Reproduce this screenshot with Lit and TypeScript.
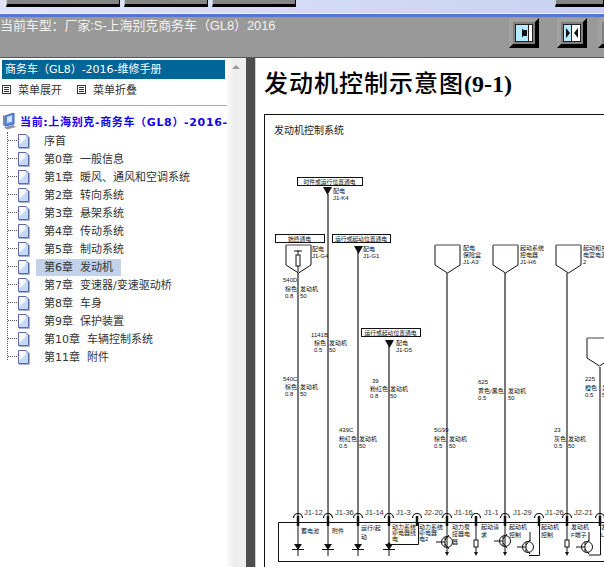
import { LitElement, html, css, svg } from "lit";
import { customElement } from "lit/decorators.js";

type T = [number, number, string];
const labels: T[] = [
  [333, 191, "配电"], [333, 198, "J1-K4"],
  [312, 249, "配电"], [312, 256, "J1-G4"],
  [363, 249, "配电"], [363, 256, "J1-G1"],
  [396, 343, "配电"], [396, 350, "J1-D5"],
  [463, 248, "配电"], [463, 255, "保险盒"], [463, 262, "J1-A3"],
  [520, 248, "起动系统"], [520, 255, "控电器"], [520, 262, "J1-H6"],
  [583, 248, "起动和充"], [583, 255, "电室电源"], [583, 262, "2"],
  [283, 280, "540D"], [285, 289, "棕色"], [300, 289, "发动机"], [285, 296, "0.8"], [300, 296, "50"],
  [311, 335, "1141B"], [314, 343, "棕色"], [329, 343, "发动机"], [314, 350, "0.5"], [329, 350, "50"],
  [283, 379, "540C"], [285, 387, "棕色"], [300, 387, "发动机"], [285, 394, "0.8"], [300, 394, "50"],
  [372, 381, "39"], [370, 389, "粉红色"], [390, 389, "发动机"], [370, 396, "0.8"], [390, 396, "50"],
  [339, 430, "439C"], [339, 439, "粉红色"], [359, 439, "发动机"], [339, 446, "0.5"], [359, 446, "50"],
  [434, 430, "5G99"], [434, 439, "棕色"], [449, 439, "发动机"], [434, 446, "0.5"], [449, 446, "50"],
  [478, 382, "625"], [478, 391, "黄色/黑色"], [508, 391, "发动机"], [478, 398, "0.5"], [508, 398, "50"],
  [585, 379, "225"], [585, 388, "橙色"], [602, 388, "发"], [585, 395, "0.5"], [602, 395, "5"],
  [554, 430, "23"], [554, 439, "灰色"], [568, 439, "发动机"], [554, 446, "0.5"], [568, 446, "50"],
  [301, 532, "蓄电池"], [332, 532, "附件"],
  [361, 529, "运行/起"], [361, 538, "动"],
  [392, 528, "动力系统"], [392, 534, "牵电器线"], [392, 540, "电"],
  [419, 528, "动力系统"], [419, 534, "牵电器"], [419, 540, "电2"],
  [452, 528, "动力泵"], [452, 535, "接器电"], [452, 543, "器"],
  [481, 528, "起动请"], [481, 536, "求"],
  [509, 528, "起动机"], [509, 536, "控制"],
  [541, 528, "起动机"], [541, 536, "控制"],
  [571, 528, "发动机"], [571, 536, "F端子"],
  [601, 528, "发"], [601, 536, "L"],
];
const pins: [number, string, number][] = [
  [298, "J1-12", 304], [328, "J1-36", 335], [358, "J1-14", 365], [389, "J1-3", 396],
  [417, "J2-20", 424], [447, "J1-16", 454], [476, "J1-1", 484], [505, "J1-29", 513],
  [539, "J1-26", 545], [567, "J2-21", 574], [600, "", 0],
];
const boxes: [number, number, number, string][] = [
  [297, 177, 65, "时件或运行位置通电"],
  [275, 234, 49, "始终通电"],
  [332, 234, 58, "运行或起动位置通电"],
  [361, 328, 59, "运行或起动位置通电"],
];
const wires: [number, number, number, boolean][] = [
  [298, 273, 520, false], [328, 194, 520, true], [358, 252, 520, true], [389, 346, 520, true],
  [447, 273, 520, false], [505, 273, 520, true], [567, 273, 520, false], [600, 367, 520, false],
];
const pentagons: [number, number, number][] = [
  [286, 245, 25], [435, 245, 25], [493, 245, 25], [556, 245, 25], [587, 338, 25],
];

const diagram = () => svg`
  <path class="ln" d="M264.5 114V567M264 114.5H604"/>
  <text class="title" x="274" y="134">发动机控制系统</text>
  ${wires.map(([x, a, b, g]) => svg`<path class=${g ? "wg" : "wd"} d="M${x} ${a}V${b}"/>`)}
  ${pentagons.map(([x, y, w]) => svg`
    <path class="ln" d="M${x} ${y}V${y + 20}L${x + w / 2} ${y + 28}L${x + w} ${y + 20}V${y}"/>
    <path class="ptop" d="M${x} ${y}H${x + w}"/>`)}
  <path class="ln" d="M298 250V272M294 251H302"/><rect class="wh" x="296" y="255" width="4" height="11"/>
  ${boxes.map(([x, y, w, t]) => svg`
    <rect class="box" x=${x + 0.5} y=${y + 0.5} width=${w} height="8"/>
    <text class="tiny" x=${x + w / 2} y=${y + 7} text-anchor="middle">${t}</text>`)}
  <path class="fill" d="M323 187H332L327.500 195Z"/>
  <path class="fill" d="M354 246H363L358.500 254Z"/>
  <path class="fill" d="M385 340H394L389.500 348Z"/>
  ${labels.map(([x, y, t]) => svg`<text class="small" x=${x} y=${y < 500 ? y + 2 : y + 1}>${t}</text>`)}
  ${pins.map(([x, t, lx]) => svg`
    <path class="arc" d="M${x - 4.5} 518A4.500 4.500 0 0 1 ${x + 4.5} 518"/>
    <path class="stub" d="M${x} 516V526"/>
    ${t ? svg`<text class="pin" x=${lx} y="515">${t}</text>` : null}`)}
  <path class="ln" d="M278.500 562V522.500H604M278 561.500H604"/>
  ${[298, 328, 358, 389].map((x) => svg`
    <path class="ln" d="M${x} 526V556M${x - 6} 549.500H${x + 6}"/>
    <path class="fill" d="M${x - 4} 544H${x + 4}L${x} 550Z"/>`)}
  <circle class="fill" cx="389" cy="544" r="1.500"/>
  <path class="ln" d="M389 544.500H418.500V522M539.500 522V555.500H529"/>
  ${[[447, 542], [505, 541], [528, 547], [587, 547]].map(([x, y]) => svg`
    <circle class="wh" cx=${x} cy=${y} r="5.500"/>
    <path class="ln" d=${`M${x - 11} ${y}H${x - 2}M${x - 2} ${y - 5}V${y + 5}M${x - 2} ${y - 2}L${x + 2} ${y - 7}M${x - 2} ${y + 2}L${x + 2} ${y + 7}`}/>`)}
  <path class="ln" d="M530 541V532M589 541V532M589 555H600.500V522"/>
  ${[447, 476, 505, 567].map((x) => svg`
    <path class="ln" d="M${x} 526V552"/>
    <path class="fill" d="M${x - 2} 552H${x + 2}L${x} 556Z"/>`)}
  <rect class="wh" x="474" y="540" width="4" height="7"/>
  <rect class="wh" x="565" y="540" width="4" height="7"/>
`;

const sections = ["序首", "第0章\u00a0\u00a0一般信息", "第1章\u00a0\u00a0暖风、通风和空调系统", "第2章\u00a0\u00a0转向系统", "第3章\u00a0\u00a0悬架系统", "第4章\u00a0\u00a0传动系统", "第5章\u00a0\u00a0制动系统", "第6章\u00a0\u00a0发动机", "第7章\u00a0\u00a0变速器/变速驱动桥", "第8章\u00a0\u00a0车身", "第9章\u00a0\u00a0保护装置", "第10章\u00a0\u00a0车辆控制系统", "第11章\u00a0\u00a0附件"];

const pageIcon = html`<svg class="page" width="13" height="16" viewBox="0 0 13 16">
  <path d="M1.500 1.500H9L11.500 4V14.500H1.500Z" fill="#c4d8f8" stroke="#5a6aa8"/>
  <path d="M2 2H8.500V6L2 12Z" fill="#f6faff"/>
  <path d="M2 15.500H12.500V4" fill="none" stroke="#aab0c8"/>
</svg>`;
const menuIcon = html`<svg class="page" width="9" height="9" viewBox="0 0 9 9"><rect x=".5" y=".5" width="8" height="8" fill="#fff" stroke="#333"/><path d="M2 2.500H7M2 4.500H7M2 6.500H7" stroke="#333"/></svg>`;
const pcIcon = html`<svg class="page" width="15" height="17" viewBox="0 0 15 17">
  <path d="M3 3L12 0V11L3 13Z" fill="#5f8fe6" stroke="#4060a8"/>
  <path d="M5 4L10 2.500V8.500L5 10Z" fill="#cfe4ff"/>
  <path d="M1 2L3 3V13L1 12Z" fill="#7888a8"/>
  <path d="M2 14L11 12L14 14L5 16.500Z" fill="#8c96b0"/>
</svg>`;
const toolBtn = (inner: unknown) => html`<svg class="tool" width="30" height="30" viewBox="0 0 30 30">
  <path d="M0 0H30V30H0Z" fill="#a0a0a0"/>
  <path d="M30 0V30H0L4 26H26V4Z" fill="#000"/>
  <rect x="4" y="4" width="22" height="22" fill="#808080"/>
  <rect x="6.500" y="6.500" width="17" height="17" fill="#b8eaff" stroke="#222"/>
  ${inner}
</svg>`;
const btnOne = svg`<rect x="20" y="7" width="3" height="16" fill="#fff"/><path d="M19.500 7V23" stroke="#222"/><path d="M13 10.500L15 12.500V17.500L13 19.500ZM15 12H18V18H15Z" fill="#111"/>`;
const btnTwo = svg`<rect x="15" y="7" width="8" height="16" fill="#fff"/><path d="M14.500 7V23" stroke="#222"/><path d="M9 10L13 15L9 20ZM21 10L17 15L21 20Z" fill="#111"/>`;

@customElement("app-root")
export class AppRoot extends LitElement {
  static styles = css`
    :host { display: block; width: 604px; height: 567px; overflow: hidden; background: #fff;
      font-family: "DejaVu Sans", "Noto Sans CJK SC", sans-serif; }
    .top { height: 14px; box-sizing: border-box; display: flex; align-items: flex-start; padding-left: 6px; gap: 4px;
      background: linear-gradient(90deg, #dfe5f6, #c6d2ef); border-bottom: 1px solid #eef1fb; }
    .tb { height: 7px; box-sizing: border-box; background: #858585; border-bottom: 3px solid #000; border-right: 1px solid #000; border-left: 1px solid #ccc; }
    .tb.a { width: 114px; } .tb.b { width: 84px; } .tb.c { width: 84px; }
    .tb.d { width: 49px; margin-left: auto; }
    .rule { height: 3px; background: #5577cc; }
    .bar { height: 41px; box-sizing: border-box; background: #999; border-bottom: 1px solid #555; display: flex; align-items: flex-start; }
    .car { flex: 1; color: #f2f2f2; font: 13px/16px "Liberation Sans", "Noto Sans CJK SC", sans-serif; letter-spacing: -0.1px; padding-top: 1px; white-space: nowrap; }
    .tools { display: flex; gap: 18px; margin-top: 1px; margin-right: -24px; }
    .tool { display: block; flex: none; }
    .tool:last-child { margin-left: -7px; }
    .main { display: flex; height: 509px; }
    .left { width: 227px; flex: none; overflow: hidden; }
    .head { margin: 2px 2px 0 2px; height: 19px; background: #006699; color: #fff; font-size: 11px; line-height: 19px; padding-left: 3px; white-space: nowrap; }
    .menu { display: flex; align-items: center; height: 20px; padding-left: 2px; font-size: 11px; color: #333; margin-bottom: 6px; }
    .menu span { margin: 0 15px 0 7px; }
    .hr { height: 1px; background: #aaa; }
    .cur { display: flex; align-items: center; height: 20px; margin-top: 5px; padding-left: 2px; gap: 3px; color: #1400f0; font-size: 11px; font-weight: bold; letter-spacing: .65px; white-space: nowrap; }
    .tree { position: relative; margin-top: 1px; }
    .tree::before { content: ""; position: absolute; left: 7px; top: 0; height: 228px; border-left: 1px dotted #555; }
    .row { display: flex; align-items: center; height: 18px; font-size: 11px; color: #333; position: relative; padding-left: 17px; white-space: nowrap; }
    .row::before { content: ""; position: absolute; left: 8px; width: 9px; top: 8px; border-top: 1px dotted #555; }
    .page { flex: none; }
    .row b { font-weight: normal; margin-left: 6px; padding: 0 8px; line-height: 17px; }
    .row b.sel { background: #c2d2ea; }
    .scroll { width: 19px; flex: none; background: linear-gradient(90deg, #fafafa, #eeeeee 35%); position: relative; }
    .scroll i { position: absolute; left: 5px; top: 7px; border: 4px solid transparent; border-top: 0; border-bottom: 4px solid #999; }
    .split { width: 9px; flex: none; background: #4d4d4d; border-right: 1px solid #ccc; }
    .right { flex: 1; min-width: 0; position: relative; overflow: hidden; }
    h1 { margin: 9px 0 0 8px; font: bold 24px/30px "Liberation Serif", serif; color: #000; white-space: nowrap; }
    h1 span { font: 500 24px/30px "Noto Sans CJK SC", sans-serif; letter-spacing: 1px; }
    .dia { position: absolute; left: 0; top: 0; display: block; }
    .ln { fill: none; stroke: #111; stroke-width: 1; }
    .wg { stroke: #777; stroke-width: 2; }
    .wd { stroke: #222; stroke-width: 1.2; }
    .ptop { fill: none; stroke: #8a7d8a; stroke-width: 1.500; }
    .wh { fill: #fff; stroke: #111; stroke-width: 1; }
    .box { fill: #fff; stroke: #111; stroke-width: 1; }
    .fill { fill: #111; }
    .arc { fill: none; stroke: #111; stroke-width: 1.200; }
    .stub { stroke: #111; stroke-width: 2.500; }
    text { font-family: "Liberation Sans", "Noto Sans CJK SC", sans-serif; fill: #111; }
    .title { font-size: 10px; fill: #222; }
    .small { font-size: 6px; }
    .tiny { font-size: 5.800px; }
    .pin { font-size: 7.500px; fill: #333; }
    .left-wrap { display: flex; flex: none; width: 246px; }
  `;

  render() {
    return html`
      <div class="top"><div class="tb a"></div><div class="tb b"></div><div class="tb c"></div><div class="tb d"></div></div>
      <div class="rule"></div>
      <div class="bar">
        <div class="car">当前车型：厂家:S-上海别克商务车（GL8）2016</div>
        <div class="tools">${toolBtn(btnOne)}${toolBtn(btnTwo)}${toolBtn(btnOne)}</div>
      </div>
      <div class="main">
        <div class="left-wrap">
          <div class="left">
            <div class="head">商务车（GL8）-2016-维修手册</div>
            <div class="menu">${menuIcon}<span>菜单展开</span>${menuIcon}<span>菜单折叠</span></div>
            <div class="hr"></div>
            <div class="cur">${pcIcon}<span>当前:上海别克-商务车（GL8）-2016-</span></div>
            <div class="tree">
              ${sections.map((s, i) => html`<div class="row">${pageIcon}<b class=${i === 7 ? "sel" : ""}>${s}</b></div>`)}
            </div>
          </div>
          <div class="scroll"><i></i></div>
        </div>
        <div class="split"></div>
        <div class="right">
          <h1><span>发动机控制示意图</span>(9-1)</h1>
          <svg class="dia" width="348" height="509" viewBox="256 58 348 509">${diagram()}</svg>
        </div>
      </div>
    `;
  }
}
